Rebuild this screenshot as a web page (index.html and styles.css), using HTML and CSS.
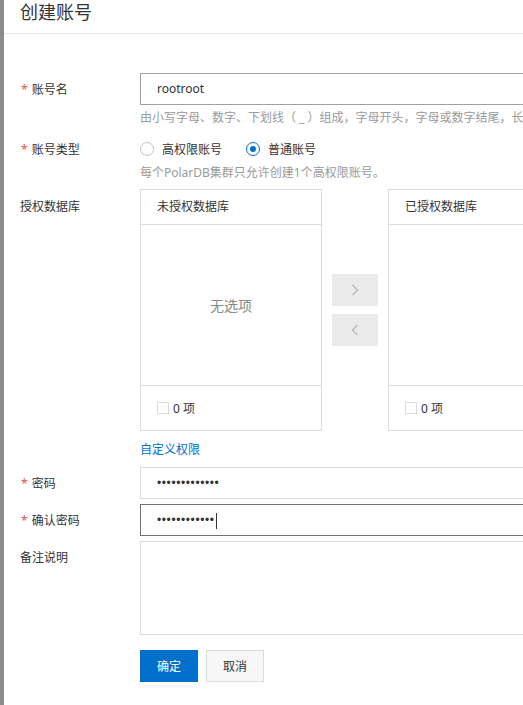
FILE: index.html
```html
<!DOCTYPE html>
<html lang="zh-CN">
<head>
<meta charset="utf-8">
<title>创建账号</title>
<link rel="stylesheet" href="styles.css">
</head>
<body>
<div class="page">
  <div class="edge"></div>
  <div class="dialog">
    <div class="header"><h1 class="title">创建账号</h1></div>
    <div class="form">
      <div class="row row-name">
        <div class="label"><span class="req">*</span>账号名</div>
        <div class="control">
          <div class="input input-hover">rootroot</div>
          <div class="help">由小写字母、数字、下划线（ _ ）组成，字母开头，字母或数字结尾，长度为2~16个字符</div>
        </div>
      </div>

      <div class="row row-type">
        <div class="label label-type"><span class="req">*</span>账号类型</div>
        <div class="control">
          <div class="radios">
            <span class="radio-item"><span class="radio"></span>高权限账号</span>
            <span class="radio-item"><span class="radio radio-on"></span>普通账号</span>
          </div>
          <div class="help help-tight">每个PolarDB集群只允许创建1个高权限账号。</div>
        </div>
      </div>

      <div class="row row-db">
        <div class="label label-db">授权数据库</div>
        <div class="control">
          <div class="transfer">
            <div class="panel">
              <div class="panel-head">未授权数据库</div>
              <div class="panel-body"><span class="empty">无选项</span></div>
              <div class="panel-foot"><span class="checkbox"></span>0 项</div>
            </div>
            <div class="ops">
              <span class="op"><svg width="8" height="12" viewBox="0 0 8 12"><polyline points="1.5,1 6.5,6 1.5,11" fill="none" stroke="#b8b8b8" stroke-width="1.3"/></svg></span>
              <span class="op"><svg width="8" height="12" viewBox="0 0 8 12"><polyline points="6.5,1 1.5,6 6.5,11" fill="none" stroke="#b8b8b8" stroke-width="1.3"/></svg></span>
            </div>
            <div class="panel">
              <div class="panel-head">已授权数据库</div>
              <div class="panel-body"></div>
              <div class="panel-foot"><span class="checkbox"></span>0 项</div>
            </div>
          </div>
          <div class="link">自定义权限</div>
        </div>
      </div>

      <div class="row row-pwd">
        <div class="label"><span class="req">*</span>密码</div>
        <div class="control">
          <div class="input dots">•••••••••••••</div>
        </div>
      </div>

      <div class="row row-confirm">
        <div class="label"><span class="req">*</span>确认密码</div>
        <div class="control">
          <div class="input input-focus dots">••••••••••••<span class="caret"></span></div>
        </div>
      </div>

      <div class="row row-remark">
        <div class="label">备注说明</div>
        <div class="control">
          <div class="textarea"></div>
        </div>
      </div>

      <div class="row row-actions">
        <div class="label"></div>
        <div class="control actions">
          <span class="btn btn-primary">确定</span>
          <span class="btn btn-normal">取消</span>
        </div>
      </div>
    </div>
  </div>
</div>
</body>
</html>
```
FILE: styles.css
```css
html, body {
  margin: 0;
  padding: 0;
  height: 100%;
  overflow: hidden;
}
body {
  font-family: "Noto Sans", "Noto Sans CJK SC", sans-serif;
  font-size: 12px;
  color: #333;
  background: #fff;
}
.page {
  display: flex;
  height: 705px;
}
.edge {
  flex: none;
  width: 4px;
  background: #8c8c8c;
}
.dialog {
  flex: 1;
  min-width: 0;
  overflow: hidden;
}
.header {
  height: 33px;
  border-bottom: 1px solid #e8e8e8;
  padding-left: 16px;
}
.title {
  margin: 0;
  font-size: 18px;
  font-weight: normal;
  line-height: 24px;
  color: #333;
}
.form {
  padding: 39px 0 0 16px;
}
.row {
  display: flex;
}
.label {
  flex: none;
  box-sizing: border-box;
  width: 120px;
  height: 32px;
  padding-top: 1px;
  line-height: 32px;
  color: #333;
  white-space: nowrap;
}
.req {
  color: #e5534b;
  margin-right: 4px;
  margin-left: 1px;
}
.control {
  flex: none;
  width: 560px;
}
.input {
  box-sizing: border-box;
  height: 32px;
  line-height: 30px;
  border: 1px solid #dcdcdc;
  padding-left: 16px;
  color: #333;
  white-space: nowrap;
}
.input-hover {
  border-color: #a0a0a0;
}
.input-focus {
  border-color: #707070;
}
.dots {
  letter-spacing: 0.6px;
  font-family: "Liberation Sans", sans-serif;
  font-size: 12px;
  color: #333;
}
.caret {
  display: inline-block;
  width: 1px;
  height: 16px;
  background: #333;
  vertical-align: middle;
  margin-left: 1px;
}
.help {
  margin-top: 4px;
  line-height: 18px;
  color: #9a9a9a;
  white-space: nowrap;
}
.help-tight {
  margin-top: 0;
}
.row-type {
  margin-top: 7px;
}
.label-type {
  height: 30px;
  line-height: 30px;
}
.radios {
  display: flex;
  align-items: center;
  height: 30px;
  gap: 24px;
}
.radio-item {
  display: flex;
  align-items: center;
  gap: 8px;
}
.radio {
  box-sizing: border-box;
  width: 14px;
  height: 14px;
  border: 1px solid #c4c4c4;
  border-radius: 50%;
  display: inline-flex;
  align-items: center;
  justify-content: center;
}
.radio-on {
  border-color: #0070cc;
}
.radio-on::after {
  content: "";
  width: 6px;
  height: 6px;
  border-radius: 50%;
  background: #0070cc;
}
.row-db {
  margin-top: 7px;
}
.label-db {
  height: 34px;
  line-height: 34px;
}
.transfer {
  display: flex;
  align-items: center;
}
.panel {
  flex: none;
  box-sizing: border-box;
  width: 182px;
  border: 1px solid #dcdcdc;
}
.panel-head {
  height: 34px;
  line-height: 34px;
  padding-left: 16px;
  border-bottom: 1px solid #dcdcdc;
  color: #333;
}
.panel-body {
  height: 160px;
  border-bottom: 1px solid #dcdcdc;
  display: flex;
  align-items: center;
  justify-content: center;
}
.empty {
  font-size: 14px;
  color: #888;
}
.panel-foot {
  height: 44px;
  display: flex;
  align-items: center;
  padding-left: 16px;
  color: #333;
}
.checkbox {
  box-sizing: border-box;
  width: 12px;
  height: 12px;
  border: 1px solid #dcdcdc;
  margin-right: 4px;
  background: #fff;
}
.ops {
  flex: none;
  width: 66px;
  display: flex;
  flex-direction: column;
  align-items: center;
  gap: 8px;
}
.op {
  width: 46px;
  height: 32px;
  background: #ebebeb;
  display: flex;
  align-items: center;
  justify-content: center;
}
.link {
  margin-top: 9px;
  line-height: 20px;
  color: #0070cc;
}
.row-pwd {
  margin-top: 7px;
}
.row-confirm {
  margin-top: 5px;
}
.row-remark {
  margin-top: 5px;
}
.textarea {
  box-sizing: border-box;
  height: 94px;
  border: 1px solid #dcdcdc;
}
.row-actions {
  margin-top: 15px;
}
.actions {
  display: flex;
  gap: 8px;
}
.btn {
  box-sizing: border-box;
  width: 58px;
  height: 32px;
  display: flex;
  align-items: center;
  justify-content: center;
  font-size: 12px;
}
.btn-primary {
  background: #0070cc;
  color: #fff;
}
.btn-normal {
  background: #f7f7f7;
  border: 1px solid #dcdcdc;
  color: #333;
}
```
